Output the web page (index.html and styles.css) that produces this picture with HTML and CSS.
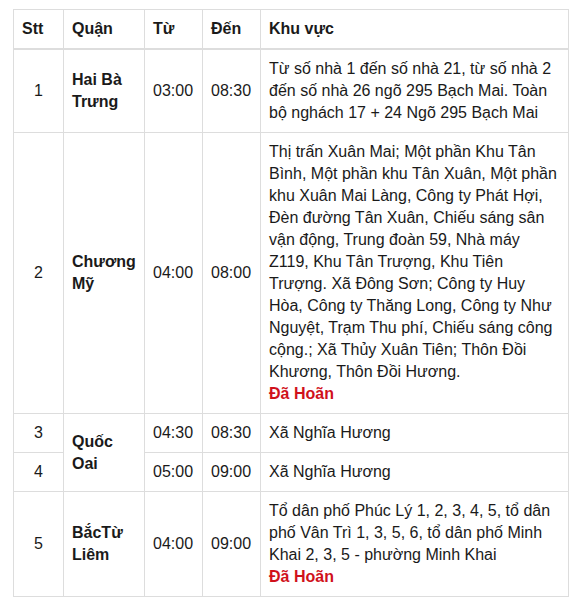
FILE: index.html
```html
<!DOCTYPE html>
<html lang="vi">
<head>
<meta charset="utf-8">
<link rel="stylesheet" href="styles.css">
</head>
<body>
<div class="wrap">
<table class="schedule">
  <colgroup>
    <col class="c-stt"><col class="c-quan"><col class="c-tu"><col class="c-den"><col class="c-khu">
  </colgroup>
  <thead>
    <tr><th>Stt</th><th>Quận</th><th>Từ</th><th>Đến</th><th>Khu vực</th></tr>
  </thead>
  <tbody>
    <tr>
      <td class="num">1</td>
      <td class="dist">Hai Bà Trưng</td>
      <td>03:00</td><td>08:30</td>
      <td>Từ số nhà 1 đến số nhà 21, từ số nhà 2 đến số nhà 26 ngõ 295 Bạch Mai. Toàn bộ nghách 17 + 24 Ngõ 295 Bạch Mai</td>
    </tr>
    <tr>
      <td class="num">2</td>
      <td class="dist">Chương Mỹ</td>
      <td>04:00</td><td>08:00</td>
      <td>Thị trấn Xuân Mai; Một phần Khu Tân Bình, Một phần khu Tân Xuân, Một phần khu Xuân Mai Làng, Công ty Phát Hợi, Đèn đường Tân Xuân, Chiếu sáng sân vận động, Trung đoàn 59, Nhà máy Z119, Khu Tân Trượng, Khu Tiên Trượng. Xã Đông Sơn; Công ty Huy Hòa, Công ty Thăng Long, Công ty Như Nguyệt, Trạm Thu phí, Chiếu sáng công cộng.; Xã Thủy Xuân Tiên; Thôn Đồi Khương, Thôn Đồi Hương.<br><strong class="delay">Đã Hoãn</strong></td>
    </tr>
    <tr>
      <td class="num">3</td>
      <td class="dist" rowspan="2">Quốc Oai</td>
      <td>04:30</td><td>08:30</td>
      <td>Xã Nghĩa Hương</td>
    </tr>
    <tr>
      <td class="num">4</td>
      <td>05:00</td><td>09:00</td>
      <td>Xã Nghĩa Hương</td>
    </tr>
    <tr>
      <td class="num">5</td>
      <td class="dist">BắcTừ Liêm</td>
      <td>04:00</td><td>09:00</td>
      <td>Tổ dân phố Phúc Lý 1, 2, 3, 4, 5, tổ dân phố Vân Trì 1, 3, 5, 6, tổ dân phố Minh Khai 2, 3, 5 - phường Minh Khai<br><strong class="delay">Đã Hoãn</strong></td>
    </tr>
  </tbody>
</table>
</div>
</body>
</html>
```

FILE: styles.css
```css
html, body {
  margin: 0;
  padding: 0;
  background: #fff;
}
.wrap {
  padding: 9px 9px 0 13px;
}
.schedule {
  border-collapse: collapse;
  width: 555px;
  table-layout: fixed;
  font-family: "Liberation Sans", Arial, Helvetica, sans-serif;
  font-size: 16px;
  line-height: 22px;
  color: #1a1a1a;
}
.c-stt { width: 50px; }
.c-quan { width: 81px; }
.c-tu { width: 58px; }
.c-den { width: 58px; }
.c-khu { width: 308px; }
.schedule th,
.schedule td {
  border: 1px solid #dddddd;
  padding: 8px 8px;
  text-align: left;
  vertical-align: middle;
}
.schedule th {
  font-weight: bold;
  border-bottom: 2px solid #dddddd;
}
.schedule td.num {
  text-align: center;
}
.schedule td.dist {
  font-weight: bold;
}
.delay {
  color: #d0111b;
  font-weight: bold;
}
```
